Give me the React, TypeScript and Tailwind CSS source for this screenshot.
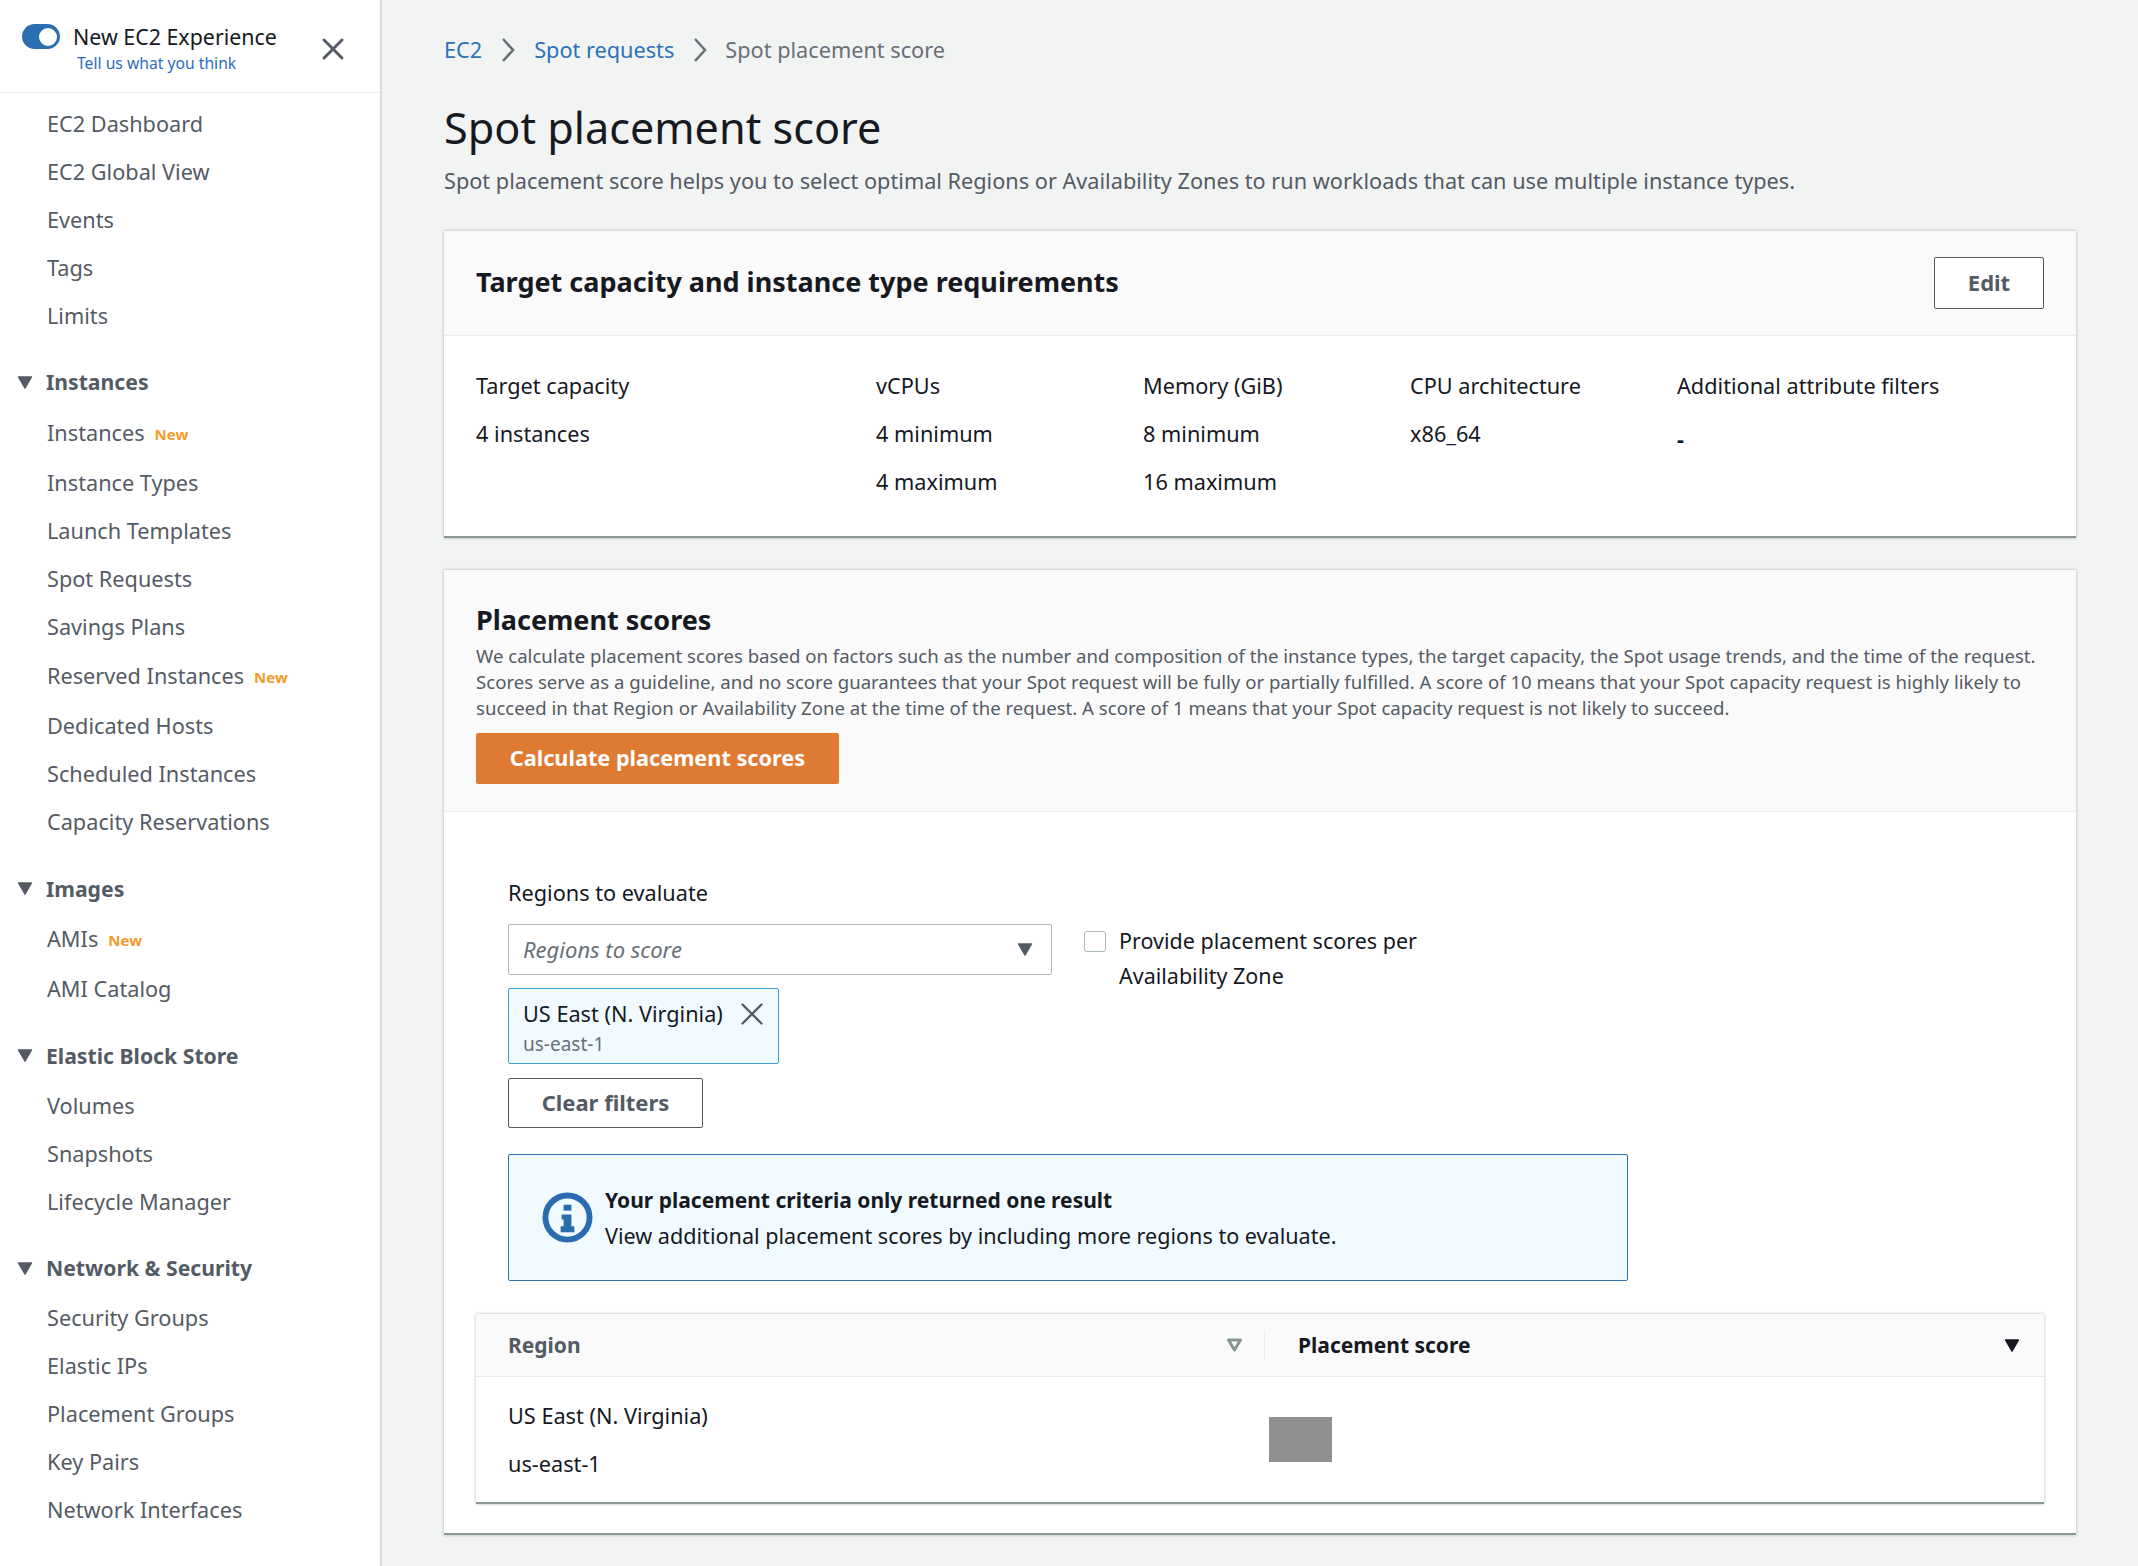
import React from 'react';
import { X } from 'lucide-react';

type NavItem = { label: string; isNew?: boolean };
type NavSection = { title: string; items: NavItem[] };

const topItems: NavItem[] = [
  { label: 'EC2 Dashboard' },
  { label: 'EC2 Global View' },
  { label: 'Events' },
  { label: 'Tags' },
  { label: 'Limits' },
];

const sections: NavSection[] = [
  {
    title: 'Instances',
    items: [
      { label: 'Instances', isNew: true },
      { label: 'Instance Types' },
      { label: 'Launch Templates' },
      { label: 'Spot Requests' },
      { label: 'Savings Plans' },
      { label: 'Reserved Instances', isNew: true },
      { label: 'Dedicated Hosts' },
      { label: 'Scheduled Instances' },
      { label: 'Capacity Reservations' },
    ],
  },
  {
    title: 'Images',
    items: [{ label: 'AMIs', isNew: true }, { label: 'AMI Catalog' }],
  },
  {
    title: 'Elastic Block Store',
    items: [{ label: 'Volumes' }, { label: 'Snapshots' }, { label: 'Lifecycle Manager' }],
  },
  {
    title: 'Network & Security',
    items: [
      { label: 'Security Groups' },
      { label: 'Elastic IPs' },
      { label: 'Placement Groups' },
      { label: 'Key Pairs' },
      { label: 'Network Interfaces' },
    ],
  },
];

function Caret({ className }: { className: string }) {
  return (
    <svg viewBox="0 0 16 14" className={className}>
      <path d="M1 1h14L8 13z" fill="currentColor" stroke="currentColor" strokeWidth="1.5" strokeLinejoin="round" />
    </svg>
  );
}

function Chevron() {
  return (
    <svg viewBox="0 0 16 26" className="h-[26px] w-[16px] text-[#687078]">
      <path d="M3 2l10 11L3 24" fill="none" stroke="currentColor" strokeWidth="2.6" />
    </svg>
  );
}

function SideLink({ item }: { item: NavItem }) {
  return (
    <div className={`flex items-center pl-[47px] text-[#545b64] ${item.isNew ? 'mb-[2px] h-[49px]' : 'h-12'}`}>
      <span>{item.label}</span>
      {item.isNew ? <span className="ml-[10px] mt-[2px] text-[15px] font-bold text-[#f39a2e]">New</span> : null}
    </div>
  );
}

function Sidebar() {
  return (
    <aside className="w-[382px] shrink-0 border-r-2 border-[#d5dbdb] bg-white text-[21.7px]">
      <div className="flex h-[93px] border-b border-[#eaeded] pl-[22px] pt-[24px]">
        <div className="flex h-[25px] w-[38px] items-center justify-end rounded-full bg-[#2b6fb3] pr-[3px]">
          <div className="h-[18px] w-[18px] rounded-full bg-white" />
        </div>
        <div className="ml-[13px]">
          <div className="text-[21.4px] leading-[26px] text-[#16191f]">New EC2 Experience</div>
          <div className="ml-[4px] mt-[3px] text-[15.7px] leading-[20px] text-[#2d6cc0]">Tell us what you think</div>
        </div>
        <X size={36} strokeWidth={2} className="ml-[38px] mt-[7px] text-[#545b64]" />
      </div>
      <nav className="pt-[7px]">
        {topItems.map((item) => (
          <SideLink key={item.label} item={item} />
        ))}
        {sections.map((section) => (
          <div key={section.title} className="mt-[17.3px]">
            <div className="flex h-[51px] items-center pb-[1px] pl-[17px] text-[21.2px] font-bold text-[#545b64]">
              <Caret className="mr-[13px] h-[13px] w-[16px]" />
              {section.title}
            </div>
            {section.items.map((item) => (
              <SideLink key={item.label} item={item} />
            ))}
          </div>
        ))}
      </nav>
    </aside>
  );
}

function SpecColumn({ label, values, width }: { label: string; values: string[]; width: string }) {
  return (
    <div className={width}>
      <div className="mb-[16px] leading-[32px]">{label}</div>
      {values.map((value) => (
        <div key={value} className={`mb-[16px] leading-[32px] ${value === '-' ? 'pt-[5px] font-bold' : ''}`}>
          {value}
        </div>
      ))}
    </div>
  );
}

export default function App() {
  return (
    <div
      className="flex h-[1566px] overflow-hidden bg-[#f2f3f3] text-[#16191f]"
      style={{ fontFamily: '"Noto Sans", "Open Sans", sans-serif' }}
    >
      <Sidebar />
      <main className="flex-1 px-[62px]">
        <div className="flex h-[32px] translate-y-[34px] items-center gap-[18px] text-[21.7px] text-[#687078]">
          <span className="text-[#2a73b8]">EC2</span>
          <Chevron />
          <span className="text-[#2a73b8]">Spot requests</span>
          <Chevron />
          <span className="ml-[-1px]">Spot placement score</span>
        </div>

        <h1 className="mt-[66px] text-[43.2px] leading-[60px]">Spot placement score</h1>
        <p className="mt-[7px] text-[21.7px] leading-[32px] text-[#545b64]">
          Spot placement score helps you to select optimal Regions or Availability Zones to run workloads that can use multiple instance types.
        </p>

        <section className="mt-[34px] h-[307px] border-b-2 border-[#8d9696] bg-white shadow-[0_0_3px_rgba(0,28,36,0.3)]">
          <div className="flex h-[105px] items-center justify-between border-b border-[#eaeded] bg-[#fafafa] px-[32px]">
            <h2 className="pb-[2px] text-[27px] font-bold">Target capacity and instance type requirements</h2>
            <button className="h-[52px] w-[110px] rounded-[2px] border border-[#545b64] bg-white pb-[2px] text-[22px] font-bold text-[#545b64]">
              Edit
            </button>
          </div>
          <div className="flex px-[32px] pt-[34px] text-[21.7px]">
            <SpecColumn label="Target capacity" values={['4 instances']} width="w-[400px]" />
            <SpecColumn label="vCPUs" values={['4 minimum', '4 maximum']} width="w-[267px]" />
            <SpecColumn label="Memory (GiB)" values={['8 minimum', '16 maximum']} width="w-[267px]" />
            <SpecColumn label="CPU architecture" values={['x86_64']} width="w-[267px]" />
            <SpecColumn label="Additional attribute filters" values={['-']} width="flex-1" />
          </div>
        </section>

        <section className="mt-[32px] h-[965px] border-b-2 border-[#8d9696] bg-white shadow-[0_0_3px_rgba(0,28,36,0.3)]">
          <div className="h-[242px] border-b border-[#eaeded] bg-[#fafafa] px-[32px] pt-[31px]">
            <h2 className="text-[27px] font-bold leading-[38px]">Placement scores</h2>
            <p className="mt-[4px] text-[18.6px] leading-[26px] text-[#545b64]">
              We calculate placement scores based on factors such as the number and composition of the instance types, the target capacity, the Spot usage trends, and the time of the request. Scores serve as a guideline, and no score guarantees that your Spot request will be fully or partially fulfilled. A score of 10 means that your Spot capacity request is highly likely to succeed in that Region or Availability Zone at the time of the request. A score of 1 means that your Spot capacity request is not likely to succeed.
            </p>
            <button className="mt-[12px] h-[51px] w-[363px] rounded-[2px] bg-[#df7a33] text-[21.7px] font-bold text-white">
              Calculate placement scores
            </button>
          </div>

          <div className="px-[32px]">
            <div className="pl-[32px] pt-[65px]">
              <div className="text-[21.7px] leading-[32px]">Regions to evaluate</div>
              <div className="mt-[15px] flex">
                <div className="w-[544px]">
                  <div className="flex h-[51px] items-center justify-between rounded-[2px] border border-[#aab7b8] pl-[14px] pr-[18px] text-[22px] italic text-[#687078]">
                    Regions to score
                    <Caret className="h-[13px] w-[16px] text-[#545b64] not-italic" />
                  </div>
                  <div className="mt-[13px] h-[76px] w-[271px] rounded-[2px] border border-[#3fa0d5] bg-[#f1faff] px-[14px] pt-[9px]">
                    <div className="flex items-center justify-between text-[21.7px] leading-[32px]">
                      US East (N. Virginia)
                      <X size={38} strokeWidth={1.5} className="my-[-4px] mr-[-7px] text-[#545b64]" />
                    </div>
                    <div className="mt-[2px] text-[19px] leading-[24px] text-[#687078]">us-east-1</div>
                  </div>
                  <button className="mt-[14px] h-[50px] w-[195px] rounded-[2px] border border-[#545b64] pb-[2px] text-[22px] font-bold text-[#545b64]">
                    Clear filters
                  </button>
                </div>
                <div className="ml-[32px] flex pt-[7px]">
                  <div className="h-[21px] w-[22px] rounded-[3px] border border-[#aab7b8] bg-white" />
                  <div className="ml-[13px] mt-[-8px] text-[21.5px] leading-[35px]">
                    Provide placement scores per
                    <br />
                    Availability Zone
                  </div>
                </div>
              </div>

              <div className="mt-[26px] flex h-[127px] w-[1120px] items-center rounded-[2px] border border-[#2f72b0] bg-[#f1faff] pl-[33px]">
                <svg viewBox="0 0 52 52" className="h-[51px] w-[51px] shrink-0 text-[#2b6cb0]">
                  <circle cx="26" cy="26" r="22.5" fill="none" stroke="currentColor" strokeWidth="6" />
                  <rect x="22" y="13" width="8" height="6" fill="currentColor" />
                  <path d="M20 23h10v12h3v6H19v-6h3v-7h-2z" fill="currentColor" />
                </svg>
                <div className="ml-[12px] text-[21.6px] leading-[36px]">
                  <div className="text-[21px] font-bold">Your placement criteria only returned one result</div>
                  <div>View additional placement scores by including more regions to evaluate.</div>
                </div>
              </div>
            </div>

            <div className="mt-[33px] h-[190px] border-b-2 border-[#8d9696] bg-white shadow-[0_0_3px_rgba(0,28,36,0.3)]">
              <div className="flex h-[63px] items-center border-b border-[#eaeded] bg-[#fafafa] text-[21px] font-bold">
                <div className="flex h-[31px] w-[789px] items-center justify-between border-r border-[#eaeded] pl-[32px] pr-[21px] text-[#545b64]">
                  <span className="pt-[2px]">Region</span>
                  <svg viewBox="0 0 16 14" className="h-[14px] w-[17px] text-[#879596]">
                    <path d="M2 2h12L8 12z" fill="none" stroke="currentColor" strokeWidth="3" strokeLinejoin="round" />
                  </svg>
                </div>
                <div className="flex flex-1 items-center justify-between pl-[33px] pr-[24px]">
                  <span className="pt-[2px]">Placement score</span>
                  <Caret className="h-[13px] w-[16px]" />
                </div>
              </div>
              <div className="flex">
                <div className="w-[793px] pl-[32px] pt-[23px] text-[21.7px] leading-[32px]">
                  <div>US East (N. Virginia)</div>
                  <div className="mt-[16px]">us-east-1</div>
                </div>
                <div className="mt-[40px] h-[45px] w-[63px] bg-[#8f8f8f]" />
              </div>
            </div>
          </div>
        </section>
      </main>
    </div>
  );
}
